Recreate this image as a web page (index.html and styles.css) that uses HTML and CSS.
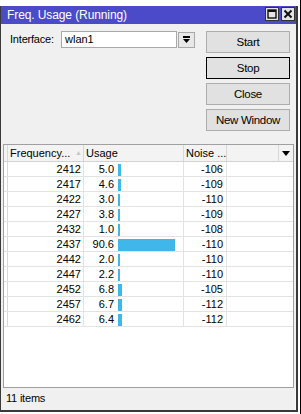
FILE: index.html
```html
<!DOCTYPE html>
<html>
    <head>
        <title>Freq. Usage</title>
        <link rel="stylesheet" href="styles.css">
    </head>
    <body>
        <div class="desk">
            <div class="window">
                <div class="titlebar">
                    <span class="title">Freq. Usage (Running)</span>
                    <span class="tb-btns">
                        <span class="tb-btn"><svg width="10" height="10" viewBox="0 0 10 10"><rect x="1" y="1" width="8" height="8" fill="none" stroke="#111" stroke-width="1.4"/><rect x="1" y="1" width="8" height="2" fill="#111"/></svg></span>
                        <span class="tb-btn"><svg width="10" height="10" viewBox="0 0 10 10"><path d="M1.5 1.5L8.5 8.5M8.5 1.5L1.5 8.5" stroke="#111" stroke-width="2"/></svg></span>
                    </span>
                </div>
                <div class="content">
                    <div class="top">
                        <div class="iface">
                            <span class="label">Interface:</span>
                            <span class="input">wlan1</span>
                            <span class="drop"><svg width="9" height="8" viewBox="0 0 9 8"><rect x="1" y="0" width="7" height="2" fill="#000"/><path d="M1 3H8L4.5 7Z" fill="#000"/></svg></span>
                        </div>
                        <div class="actions">
                            <button>Start</button>
                            <button class="focus">Stop</button>
                            <button>Close</button>
                            <button>New Window</button>
                        </div>
                    </div>
                    <div class="table">
                        <div class="thead">
                            <span class="mark"></span>
                            <span class="th freq">Frequency...<span class="sort">&#9650;</span></span>
                            <span class="th usage">Usage</span>
                            <span class="th noise">Noise ...</span>
                            <span class="th blank"></span>
                            <span class="th menu"><svg width="8" height="5" viewBox="0 0 8 5"><path d="M0 0H8L4 5Z" fill="#000"/></svg></span>
                        </div>
                        <div class="row"><span class="mark"></span><span class="freq">2412</span><span class="usage"><span class="num">5.0</span><span class="bar" style="width:3px"></span></span><span class="noise">-106</span><span class="rest"></span></div>
                        <div class="row"><span class="mark"></span><span class="freq">2417</span><span class="usage"><span class="num">4.6</span><span class="bar" style="width:3px"></span></span><span class="noise">-109</span><span class="rest"></span></div>
                        <div class="row"><span class="mark"></span><span class="freq">2422</span><span class="usage"><span class="num">3.0</span><span class="bar" style="width:2px"></span></span><span class="noise">-110</span><span class="rest"></span></div>
                        <div class="row"><span class="mark"></span><span class="freq">2427</span><span class="usage"><span class="num">3.8</span><span class="bar" style="width:2px"></span></span><span class="noise">-109</span><span class="rest"></span></div>
                        <div class="row"><span class="mark"></span><span class="freq">2432</span><span class="usage"><span class="num">1.0</span><span class="bar" style="width:2px"></span></span><span class="noise">-108</span><span class="rest"></span></div>
                        <div class="row"><span class="mark"></span><span class="freq">2437</span><span class="usage"><span class="num">90.6</span><span class="bar" style="width:57px"></span></span><span class="noise">-110</span><span class="rest"></span></div>
                        <div class="row"><span class="mark"></span><span class="freq">2442</span><span class="usage"><span class="num">2.0</span><span class="bar" style="width:2px"></span></span><span class="noise">-110</span><span class="rest"></span></div>
                        <div class="row"><span class="mark"></span><span class="freq">2447</span><span class="usage"><span class="num">2.2</span><span class="bar" style="width:2px"></span></span><span class="noise">-110</span><span class="rest"></span></div>
                        <div class="row"><span class="mark"></span><span class="freq">2452</span><span class="usage"><span class="num">6.8</span><span class="bar" style="width:4px"></span></span><span class="noise">-105</span><span class="rest"></span></div>
                        <div class="row"><span class="mark"></span><span class="freq">2457</span><span class="usage"><span class="num">6.7</span><span class="bar" style="width:4px"></span></span><span class="noise">-112</span><span class="rest"></span></div>
                        <div class="row"><span class="mark"></span><span class="freq">2462</span><span class="usage"><span class="num">6.4</span><span class="bar" style="width:4px"></span></span><span class="noise">-112</span><span class="rest"></span></div>
                    </div>
                    <div class="status">11 items</div>
                </div>
            </div>
        </div>
    </body>
</html>
```

FILE: styles.css
```css
* {
    box-sizing:border-box;
}
body {
    margin:0;
    background:#fff;
    font:11px/14px 'Liberation Sans', Arial, sans-serif;
    color:#000;
}
.desk {
    width:301px;
    height:414px;
    padding-top:6px;
    border-right:1px solid #000;
}
.window {
    width:298px;
    height:406px;
    border-left:1px solid #3a3a3a;
    border-right:2px solid #3a3a3a;
    border-bottom:2px solid #3a3a3a;
    background:#f0f0f0;
    display:flex;
    flex-direction:column;
}
.titlebar {
    height:18px;
    background:#4b4bc9;
    display:flex;
    justify-content:space-between;
    align-items:flex-start;
    padding:0 1px 0 6px;
}
.title {
    color:#fff;
    font-size:12px;
    line-height:18px;
    letter-spacing:-0.1px;
}
.tb-btns {
    display:flex;
    gap:2px;
    margin-top:1px;
}
.tb-btn {
    width:14px;
    height:14px;
    background:#e4e4e4;
    border:1px solid #333;
    display:flex;
    align-items:center;
    justify-content:center;
}
.content {
    flex:1;
    display:flex;
    flex-direction:column;
}
.top {
    display:flex;
    justify-content:space-between;
    padding:7px 6px 0 9px;
    height:120px;
}
.iface {
    display:flex;
    align-items:flex-start;
}
.label {
    width:51px;
    line-height:17px;
    letter-spacing:-0.2px;
}
.input {
    width:116px;
    height:17px;
    background:#fff;
    border:1px solid #a8a8a8;
    padding-left:3px;
    line-height:15px;
}
.drop {
    width:17px;
    height:16px;
    margin:1px 0 0 1px;
    background:#e8e8e8;
    border:1px solid #a8a8a8;
    display:flex;
    align-items:center;
    justify-content:center;
}
.actions {
    width:84px;
    display:flex;
    flex-direction:column;
    gap:4px;
}
.actions button {
    height:22px;
    background:#e1e1e1;
    border:1px solid #adadad;
    font:11.5px 'Liberation Sans', Arial, sans-serif;
    letter-spacing:-0.3px;
    color:#000;
    padding:0;
}
.actions button.focus {
    border-color:#000;
}
.table {
    height:244px;
    margin:0 2px;
    background:#fff;
    border:1px solid #a0a0a0;
}
.thead, .row {
    display:grid;
    grid-template-columns:4px 76px 100px 43px 52px 14px;
}
.row {
    grid-template-columns:4px 76px 100px 43px 66px;
    height:15px;
    border-bottom:1px solid #e3e3e3;
}
.thead {
    height:17px;
    background:#f3f3f3;
    border-bottom:1px solid #d2d2d2;
}
.mark {
    border-right:1px solid #d8d8d8;
}
.th {
    border-right:1px solid #d8d8d8;
    padding-left:2px;
    line-height:16px;
    white-space:nowrap;
    overflow:hidden;
}
.th.freq {
    position:relative;
}
.sort {
    position:absolute;
    left:67px;
    top:0;
    font-size:7px;
    color:#c8c8c8;
}
.th.menu {
    border-right:none;
    display:flex;
    align-items:center;
    justify-content:center;
    padding:0;
}
.row .freq, .row .usage, .row .noise {
    border-right:1px solid #e3e3e3;
}
.row .freq {
    text-align:right;
    padding-right:2px;
}
.row .noise {
    text-align:right;
    padding-right:3px;
}
.usage {
    display:flex;
    align-items:flex-start;
}
.num {
    width:30px;
    text-align:right;
}
.bar {
    height:12px;
    margin:2px 0 0 4px;
    background:#3fb7ea;
}
.status {
    height:22px;
    padding-left:5px;
    line-height:21px;
    border-right:1px solid #fafafa;
    letter-spacing:-0.2px;
}
```
